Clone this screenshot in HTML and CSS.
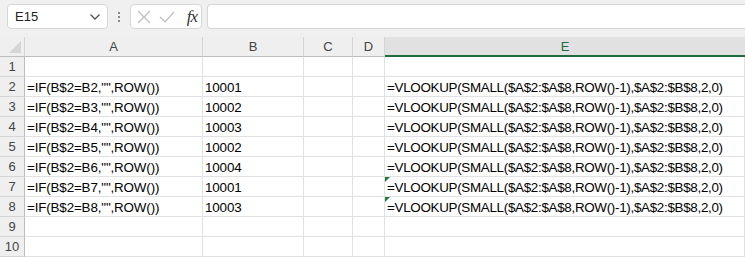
FILE: index.html
```html
<!DOCTYPE html>
<html lang="en">
<head>
  <meta charset="UTF-8">
  <title>Sheet</title>
  <link rel="stylesheet" href="styles.css">
</head>
<body>
  <div class="toolbar">
    <div class="namebox">
      <span>E15</span>
      <svg class="chev" width="12" height="8" viewBox="0 0 12 8"><path d="M1.5 1.5 L6 6 L10.5 1.5" fill="none" stroke="#555" stroke-width="1.3"/></svg>
    </div>
    <div class="grip"><i></i><i></i><i></i></div>
    <div class="fxbox">
      <svg width="14" height="14" viewBox="0 0 14 14"><path d="M1 1 L13 13 M13 1 L1 13" stroke="#bdbdbd" stroke-width="1.2"/></svg>
      <svg width="16" height="14" viewBox="0 0 16 14"><path d="M1 7 L6 12 L15 2" fill="none" stroke="#bdbdbd" stroke-width="1.2"/></svg>
      <span class="fx">fx</span>
    </div>
    <div class="formula"></div>
  </div>

  <div class="sheet">
    <div class="corner"><span class="tri"></span></div>
    <div class="colh">A</div>
    <div class="colh">B</div>
    <div class="colh">C</div>
    <div class="colh">D</div>
    <div class="colh active">E</div>

    <div class="rowh">1</div><div class="cell"></div><div class="cell"></div><div class="cell"></div><div class="cell"></div><div class="cell"></div>
    <div class="rowh">2</div><div class="cell">=IF(B$2=B2,"",ROW())</div><div class="cell">10001</div><div class="cell"></div><div class="cell"></div><div class="cell wide">=VLOOKUP(SMALL($A$2:$A$8,ROW()-1),$A$2:$B$8,2,0)</div>
    <div class="rowh">3</div><div class="cell">=IF(B$2=B3,"",ROW())</div><div class="cell">10002</div><div class="cell"></div><div class="cell"></div><div class="cell wide">=VLOOKUP(SMALL($A$2:$A$8,ROW()-1),$A$2:$B$8,2,0)</div>
    <div class="rowh">4</div><div class="cell">=IF(B$2=B4,"",ROW())</div><div class="cell">10003</div><div class="cell"></div><div class="cell"></div><div class="cell wide">=VLOOKUP(SMALL($A$2:$A$8,ROW()-1),$A$2:$B$8,2,0)</div>
    <div class="rowh">5</div><div class="cell">=IF(B$2=B5,"",ROW())</div><div class="cell">10002</div><div class="cell"></div><div class="cell"></div><div class="cell wide">=VLOOKUP(SMALL($A$2:$A$8,ROW()-1),$A$2:$B$8,2,0)</div>
    <div class="rowh">6</div><div class="cell">=IF(B$2=B6,"",ROW())</div><div class="cell">10004</div><div class="cell"></div><div class="cell"></div><div class="cell wide">=VLOOKUP(SMALL($A$2:$A$8,ROW()-1),$A$2:$B$8,2,0)</div>
    <div class="rowh">7</div><div class="cell">=IF(B$2=B7,"",ROW())</div><div class="cell">10001</div><div class="cell"></div><div class="cell"></div><div class="cell wide flag">=VLOOKUP(SMALL($A$2:$A$8,ROW()-1),$A$2:$B$8,2,0)</div>
    <div class="rowh">8</div><div class="cell">=IF(B$2=B8,"",ROW())</div><div class="cell">10003</div><div class="cell"></div><div class="cell"></div><div class="cell wide flag">=VLOOKUP(SMALL($A$2:$A$8,ROW()-1),$A$2:$B$8,2,0)</div>
    <div class="rowh">9</div><div class="cell"></div><div class="cell"></div><div class="cell"></div><div class="cell"></div><div class="cell"></div>
    <div class="rowh">10</div><div class="cell"></div><div class="cell"></div><div class="cell"></div><div class="cell"></div><div class="cell"></div>
  </div>
</body>
</html>
```

FILE: styles.css
```css
body{margin:0;background:#f0f0f0;font-family:"Liberation Sans",Arial,sans-serif;overflow:hidden}

/* строка формул */
.toolbar{display:flex;height:37px;padding:4px 0 0 7px;box-sizing:border-box;align-items:flex-start}
.namebox{width:101px;height:25px;box-sizing:border-box;background:#fff;border:1px solid #d6d6d6;border-radius:4px;
  display:flex;align-items:center;justify-content:space-between;padding:0 6px 0 7px;font-size:13px;color:#222}
.grip{width:22px;height:25px;display:flex;flex-direction:column;align-items:center;justify-content:center;gap:2px}
.grip i{width:2px;height:2px;background:#8a8a8a;display:block}
.fxbox{width:72px;height:25px;box-sizing:border-box;background:#fff;border:1px solid #d6d6d6;border-radius:4px;
  display:flex;align-items:center;gap:8px;padding:0 4px 0 6px}
.fx{font-family:"Liberation Serif",serif;font-style:italic;font-size:17px;color:#333;margin-left:auto;letter-spacing:-1px}
.formula{flex:1;height:25px;margin-left:5px;box-sizing:border-box;background:#fff;border:1px solid #d6d6d6;border-right:none;border-radius:4px 0 0 4px}

/* сетка листа */
.sheet{display:grid;grid-template-columns:25px 178px 101px 49px 32px 1fr;grid-auto-rows:20px;background:#fff}
.corner,.colh,.rowh{background:#efefef;color:#444;font-size:13px;box-sizing:border-box}
.corner{border-right:1px solid #d4d4d4;border-bottom:1px solid #bdbdbd;position:relative}
.tri{position:absolute;right:3px;bottom:3px;width:0;height:0;border-left:12px solid transparent;border-bottom:12px solid #d6d6d6}
.colh{display:flex;align-items:center;justify-content:center;border-right:1px solid #d4d4d4;border-bottom:1px solid #bdbdbd}
.colh.active{background:#e1e1e1;color:#1e6b3f;border-bottom:2px solid #1e6b3f;border-right:none}
.rowh{display:flex;align-items:center;justify-content:center;border-right:1px solid #bdbdbd;border-bottom:1px solid #d4d4d4}
.cell{box-sizing:border-box;border-right:1px solid #e1e1e1;border-bottom:1px solid #e1e1e1;font-size:13.4px;color:#000;
  padding:3px 0 0 2px;white-space:nowrap;overflow:visible;position:relative;letter-spacing:-0.15px}
.cell.wide{letter-spacing:-0.3px}
.cell.flag::before{content:"";position:absolute;left:0;top:0;border-top:5px solid #1e7b3e;border-right:5px solid transparent}
```
